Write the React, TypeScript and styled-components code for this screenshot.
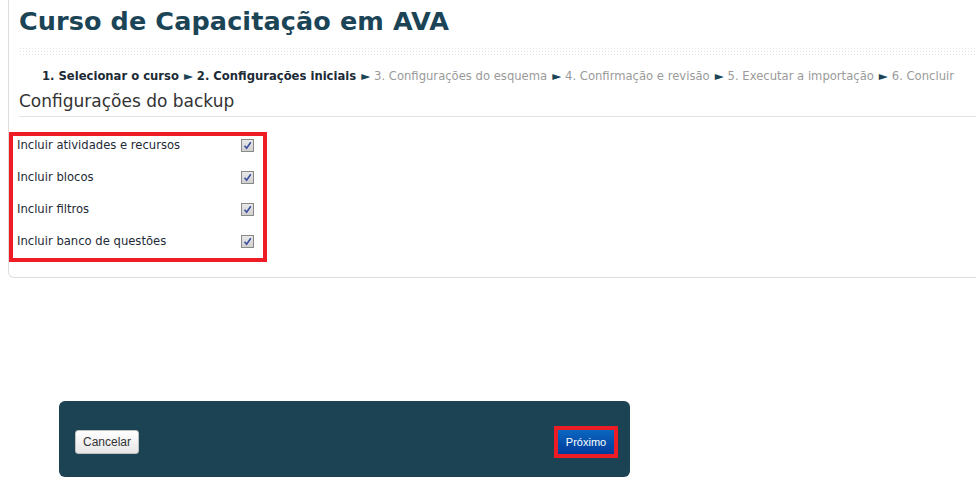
import React from "react";
import styled, { createGlobalStyle } from "styled-components";

const Global = createGlobalStyle`
  html, body { margin: 0; padding: 0; background: #fff; overflow: hidden; }
  body { font-family: "DejaVu Sans", Verdana, sans-serif; color: #333; }
`;

const Page = styled.div`
  width: 976px;
  height: 482px;
  overflow: hidden;
  display: flex;
  flex-direction: column;
`;

const Card = styled.section`
  margin-left: 8px;
  margin-right: -20px;
  border: 1px solid #dedede;
  border-top: none;
  border-radius: 0 0 0 6px;
  padding: 5px 0 15px 0;
`;

const Title = styled.h1`
  margin: 0 0 0 10px;
  font-family: "DejaVu Sans", Verdana, sans-serif;
  font-weight: bold;
  font-size: 25.5px;
  line-height: 32px;
  color: #1b4456;
  letter-spacing: 0.1px;
`;

const Dots = styled.div`
  margin: 10px 0 0 10px;
  height: 9px;
  background-image: radial-gradient(circle, #e4e4e4 0.8px, transparent 1px);
  background-size: 3px 3px;
`;

const Steps = styled.div`
  margin: 13px 0 0 33px;
  font-size: 11.6px;
  line-height: 14px;
  white-space: nowrap;
  color: #999;
`;

const Step = styled.span<{ $done?: boolean }>`
  font-weight: ${(p) => (p.$done ? "bold" : "normal")};
  color: ${(p) => (p.$done ? "#1c2b36" : "#9a9a9a")};
`;

const Arrow = styled.span`
  color: #1b4456;
  font-size: 11.6px;
  margin: 0 4px 0 5px;
`;

const Heading = styled.h2`
  margin: 8px 0 0 10px;
  padding-bottom: 5px;
  border-bottom: 1px solid #e2e2e2;
  font-weight: normal;
  font-size: 17px;
  line-height: 20px;
  color: #333;
`;

const Fieldset = styled.div`
  margin-top: 15px;
  box-sizing: border-box;
  width: 258px;
  height: 130px;
  border: 4px solid #ee1c25;
  padding: 0 0 0 4px;
  display: flex;
  flex-direction: column;
  gap: 14px;
`;

const Row = styled.label`
  display: flex;
  align-items: center;
  justify-content: space-between;
  height: 18px;
  padding-right: 9px;
  font-size: 11.6px;
  color: #1e2a36;
`;

const Box = styled.span`
  width: 11px;
  height: 11px;
  border: 1px solid #8a8a8a;
  background: linear-gradient(#e8e8e8, #d0d0d0);
  display: flex;
  align-items: center;
  justify-content: center;
`;

const Check = () => (
  <svg width="9" height="9" viewBox="0 0 9 9">
    <path d="M1.5 4.8 L3.6 7.2 L7.8 1.2" fill="none" stroke="#3a4f9e" strokeWidth="1.6" />
  </svg>
);

const Spacer = styled.div`
  height: 123px;
`;

const Footer = styled.footer`
  margin-left: 59px;
  width: 571px;
  height: 76px;
  background: #1b4353;
  border-radius: 6px;
  display: flex;
  align-items: center;
  justify-content: space-between;
  padding: 0 12px 0 16px;
  box-sizing: border-box;
`;

const CancelButton = styled.button`
  font-family: "Liberation Sans", Arial, sans-serif;
  font-size: 12px;
  color: #333;
  width: 64px;
  height: 24px;
  margin-top: 5px;
  border: 1px solid #bfbfbf;
  border-radius: 3px;
  background: linear-gradient(#ffffff, #e6e6e6);
  padding: 0;
`;

const Highlight = styled.div`
  border: 4px solid #ee1c25;
  margin-top: 5px;
  display: flex;
`;

const NextButton = styled.button`
  font-family: "Liberation Sans", Arial, sans-serif;
  font-size: 11px;
  color: #fff;
  width: 56px;
  height: 24px;
  border: none;
  background: linear-gradient(#0a67bf, #003b9b);
  padding: 0;
`;

const items = [
  "Incluir atividades e recursos",
  "Incluir blocos",
  "Incluir filtros",
  "Incluir banco de questões",
];

const steps = [
  { label: "1. Selecionar o curso", done: true },
  { label: "2. Configurações iniciais", done: true },
  { label: "3. Configurações do esquema", done: false },
  { label: "4. Confirmação e revisão", done: false },
  { label: "5. Executar a importação", done: false },
  { label: "6. Concluir", done: false },
];

export default function App() {
  return (
    <Page>
      <Global />
      <Card>
        <Title>Curso de Capacitação em AVA</Title>
        <Dots />
        <Steps>
          {steps.map((s, i) => (
            <React.Fragment key={s.label}>
              {i > 0 && <Arrow>►</Arrow>}
              <Step $done={s.done}>{s.label}</Step>
            </React.Fragment>
          ))}
        </Steps>
        <Heading>Configurações do backup</Heading>
        <Fieldset>
          {items.map((t) => (
            <Row key={t}>
              <span>{t}</span>
              <Box>
                <Check />
              </Box>
            </Row>
          ))}
        </Fieldset>
      </Card>
      <Spacer />
      <Footer>
        <CancelButton>Cancelar</CancelButton>
        <Highlight>
          <NextButton>Próximo</NextButton>
        </Highlight>
      </Footer>
    </Page>
  );
}
